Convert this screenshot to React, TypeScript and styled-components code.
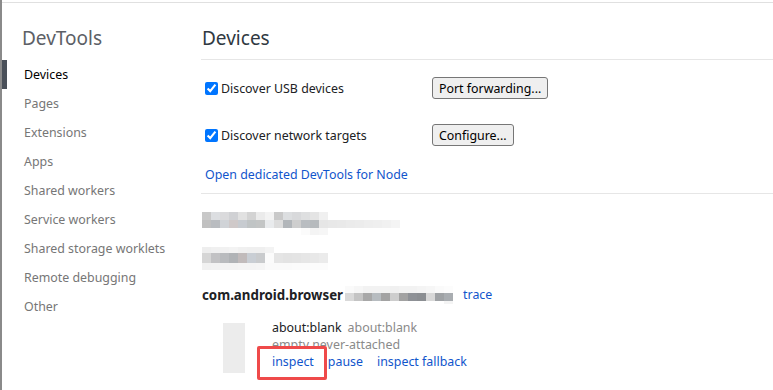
import React from "react";
import styled, { createGlobalStyle } from "styled-components";

const Global = createGlobalStyle`
  html, body { margin: 0; padding: 0; background: #fff; }
  body { font-family: "Noto Sans", "Open Sans", sans-serif; font-size: 12.4px; color: #202124; }
  * { box-sizing: border-box; }
`;

const Frame = styled.div`
  width: 773px;
  height: 390px;
  border-left: 2px solid #8a8a8a;
  display: flex;
  flex-direction: column;
  overflow: hidden;
`;

const TopRule = styled.div`
  height: 1px;
  margin-top: 2px;
  background: #e0e0e0;
`;

const Body = styled.div`
  display: flex;
  flex: 1;
`;

const Sidebar = styled.nav`
  width: 199px;
  flex: none;
  display: flex;
  flex-direction: column;
`;

const SideTitle = styled.div`
  font-size: 19px;
  line-height: 30px;
  color: #5c6066;
  padding: 20px 0 7px 20px;
`;

const SideItem = styled.div<{ $active?: boolean }>`
  height: 29px;
  line-height: 29px;
  font-size: 12.4px;
  color: ${(p) => (p.$active ? "#000" : "#767676")};
  margin-left: ${(p) => (p.$active ? "-2px" : "0")};
  border-left: ${(p) => (p.$active ? "7px solid #4a5059" : "none")};
  padding-left: ${(p) => (p.$active ? "17px" : "22px")};
`;

const Main = styled.main`
  flex: 1;
  display: flex;
  flex-direction: column;
`;

const Header = styled.h1`
  margin: 0;
  font-size: 19px;
  font-weight: normal;
  line-height: 30px;
  color: #303942;
  padding: 20px 0 6px 1px;
  border-bottom: 1px solid #e6e6e6;
`;

const Options = styled.div`
  display: grid;
  grid-template-columns: 231px auto;
  row-gap: 25px;
  padding-top: 17px;
  align-items: center;
  justify-items: start;
`;

const CheckLabel = styled.label`
  display: flex;
  align-items: center;
  height: 22px;
  color: #202124;
`;

const Check = styled.input`
  width: 13px;
  height: 13px;
  margin: 0 3px 0 4px;
`;

const Button = styled.button`
  height: 22px;
  padding: 0 6px;
  font-family: inherit;
  font-size: 12.4px;
  color: #000;
  background: #efefef;
  border: 1px solid #767676;
  border-radius: 3px;
`;

const Link = styled.a`
  color: #1155cc;
  text-decoration: none;
  cursor: pointer;
`;

const NodeLink = styled(Link)`
  display: block;
  line-height: 17px;
  margin-top: 20px;
  padding: 0 0 10px 4px;
  border-bottom: 1px solid #e6e6e6;
`;

const DeviceArea = styled.section`
  padding-left: 1px;
  display: flex;
  flex-direction: column;
`;

const MosaicBox = styled.div<{ $mt: number }>`
  display: flex;
  flex-direction: column;
  margin-top: ${(p) => p.$mt}px;
`;

const MosaicRow = styled.div<{ $h: number }>`
  display: flex;
  height: ${(p) => p.$h}px;
`;

const Cell = styled.div<{ $c: string }>`
  width: 9px;
  height: 100%;
  background: ${(p) => p.$c};
`;

const InlineMosaic = styled(MosaicBox)`
  display: inline-flex;
  margin: 0 10px 0 2px;
`;

const BrowserLine = styled.div`
  display: flex;
  align-items: center;
  margin-top: 16px;
  height: 17px;
`;

const BrowserName = styled.span`
  font-weight: bold;
  font-size: 13.3px;
  color: #202124;
`;

const Target = styled.div`
  display: flex;
  margin-top: 16px;
  padding-left: 21px;
  position: relative;
`;

const Thumb = styled.div`
  width: 22px;
  height: 50px;
  margin-top: 4px;
  background: #ececec;
  flex: none;
`;

const TargetInfo = styled.div`
  margin-left: 27px;
  display: flex;
  flex-direction: column;
  line-height: 17px;
  position: relative;
`;

const TitleLine = styled.div`
  display: flex;
  gap: 6px;
  color: #202124;
`;

const Muted = styled.span`
  color: #8a8a8a;
`;

const ClippedLine = styled.div`
  height: 13px;
  overflow: hidden;
  color: #8a8a8a;
`;

const Actions = styled.div`
  display: flex;
  gap: 14px;
  margin-top: 4px;
`;

const Highlight = styled.div`
  position: absolute;
  left: -15px;
  top: 27px;
  width: 70px;
  height: 34px;
  border: 3px solid #ef4a4a;
  border-radius: 2px;
`;

const m1 = [
  { h: 8, c: ["#c8c8c8","#dcdee1","#dadadc","#d0d1d4","#e1e1e1","#d3d3d3","#ebebeb","#f3f3f3","#c9c9c9","#dcdee0","#d8d9db","#dedfe0","#e4e4e4","#f0f0f0"] },
  { h: 8, c: ["#c0c0c0","#b9bcc0","#d0d3d7","#cfc9c9","#c7cbd0","#c0c4c5","#c3c5c5","#e9ebed","#dddddd","#b2b6ba","#cecece","#b9bdc1","#b6babd","#e6e6e6","#e8e8e8","#e9e9e9","#ebebeb","#ececec","#eeeeee","#efefef","#f1f1f1","#f4f4f4"] },
  { h: 7, c: ["#fff","#fff","#fff","#fff","#fff","#fff","#fff","#fff","#fff","#fff","#fff","#fbfbfb","#f4f4f4","#f6f6f6"] },
];

const m2 = [
  { h: 6, c: ["#eeeeee","#f0f0f0","#f1f1f1","#f3f3f3","#f0f0f0","#efefef","#efefef","#f3f3f3"] },
  { h: 10, c: ["#d6d6d6","#c2c2c4","#b9bbbe","#b0b3b6","#c1bbbb","#c9ced4","#c9cbcd","#fbfbfb","#e5e5e5","#e3e3e3","#e4e4e4","#e6e6e6","#e8e8e8","#ebebeb"] },
  { h: 7, c: ["#f1f1f1","#f2f2f2","#f3f3f3","#f3f3f3","#f4f4f4","#f4f4f4","#f5f5f5","#fafafa","#fafafa","#fafafa","#fbfbfb","#fbfbfb","#fcfcfc","#fcfcfc"] },
];

const m3 = [
  { h: 7, c: ["#fafafa","#f6f6f6","#f2f2f2","#f2f2f2","#f2f2f2","#f0f0f0","#f2f2f2","#f2f2f2","#f4f4f4","#f6f6f6","#fafafa","#fcfcfc"] },
  { h: 8, c: ["#d9d9d9","#c4c4c4","#a8a8a8","#b7bcc0","#a3a3a3","#cdcdcd","#a2a2a2","#8e9196","#8b8e92","#d8d8d8","#9fa2a5","#a9adb1"] },
  { h: 3, c: ["#fff","#fff","#fff","#fff","#fff","#fff","#fff","#fff","#fff","#fff","#fff","#f4f4f4"] },
];

type Rows = { h: number; c: string[] }[];

const MosaicRows = ({ rows }: { rows: Rows }) => (
  <>
    {rows.map((r, i) => (
      <MosaicRow key={i} $h={r.h}>
        {r.c.map((c, j) => (
          <Cell key={j} $c={c} />
        ))}
      </MosaicRow>
    ))}
  </>
);

const items = [
  "Devices",
  "Pages",
  "Extensions",
  "Apps",
  "Shared workers",
  "Service workers",
  "Shared storage worklets",
  "Remote debugging",
  "Other",
];

export default function App() {
  return (
    <>
      <Global />
      <Frame>
        <TopRule />
        <Body>
          <Sidebar>
            <SideTitle>DevTools</SideTitle>
            {items.map((it, i) => (
              <SideItem key={it} $active={i === 0}>
                {it}
              </SideItem>
            ))}
          </Sidebar>
          <Main>
            <Header>Devices</Header>
            <Options>
              <CheckLabel>
                <Check type="checkbox" defaultChecked />
                Discover USB devices
              </CheckLabel>
              <Button>Port forwarding...</Button>
              <CheckLabel>
                <Check type="checkbox" defaultChecked />
                Discover network targets
              </CheckLabel>
              <Button>Configure...</Button>
            </Options>
            <NodeLink>Open dedicated DevTools for Node</NodeLink>
            <DeviceArea>
              <MosaicBox $mt={18}>
                <MosaicRows rows={m1} />
              </MosaicBox>
              <MosaicBox $mt={12}>
                <MosaicRows rows={m2} />
              </MosaicBox>
              <BrowserLine>
                <BrowserName>com.android.browser</BrowserName>
                <InlineMosaic $mt={0}>
                  <MosaicRows rows={m3} />
                </InlineMosaic>
                <Link>trace</Link>
              </BrowserLine>
              <Target>
                <Thumb />
                <TargetInfo>
                  <TitleLine>
                    <span>about:blank</span>
                    <Muted>about:blank</Muted>
                  </TitleLine>
                  <ClippedLine>empty never-attached</ClippedLine>
                  <Actions>
                    <Link>inspect</Link>
                    <Link>pause</Link>
                    <Link>inspect fallback</Link>
                  </Actions>
                  <Highlight />
                </TargetInfo>
              </Target>
            </DeviceArea>
          </Main>
        </Body>
      </Frame>
    </>
  );
}
